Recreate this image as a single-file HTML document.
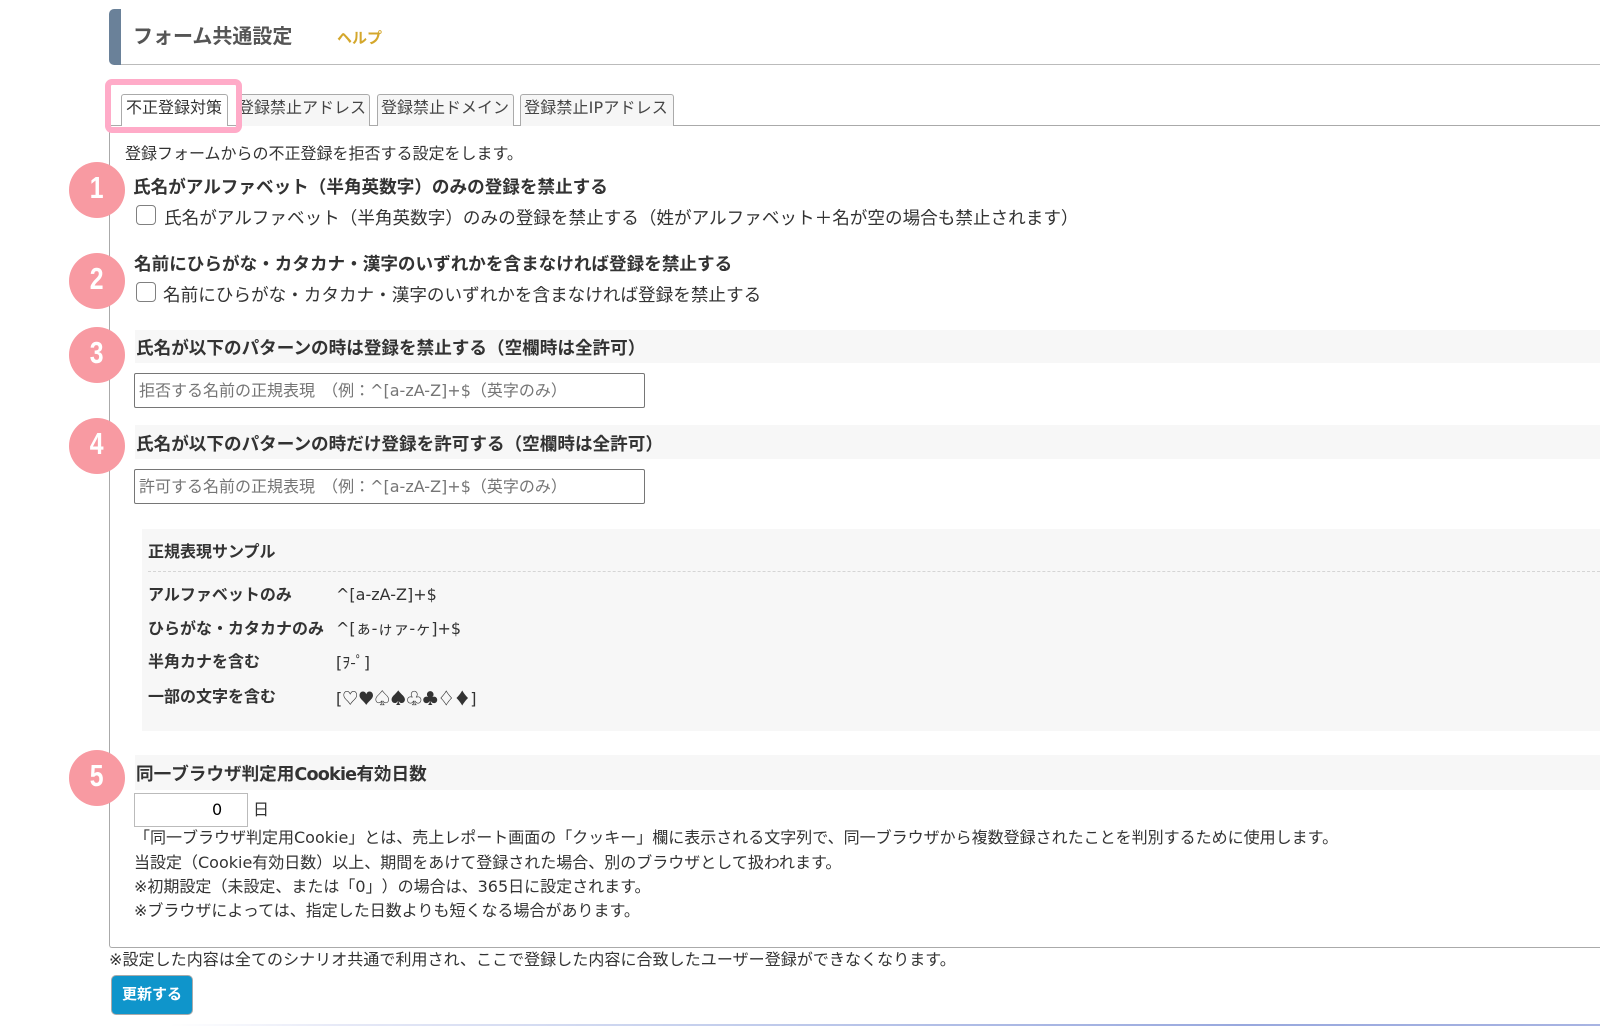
<!DOCTYPE html>
<html lang="ja"><head><meta charset="utf-8"><style>
html,body{margin:0;padding:0;background:#fff;}
body{width:1600px;height:1026px;position:relative;overflow:hidden;font-family:"DejaVu Sans","Noto Sans CJK JP",sans-serif;color:#333;font-size:16px;text-spacing-trim:space-all;}
.t{position:absolute;white-space:nowrap;line-height:24px;}
.b{font-weight:700;color:#333;font-size:17.6px;}
.l{font-size:17.6px;}
.s{font-weight:700;font-family:"Liberation Sans","Noto Sans CJK JP",sans-serif;}
.r{position:absolute;}
.n{position:absolute;left:69px;width:56px;height:56px;border-radius:50%;background:#f89aa2;color:#fff;font-size:31px;font-weight:700;line-height:52px;text-align:center;font-family:"Liberation Sans",sans-serif;}
.n span{display:inline-block;transform:scaleX(.8);}
.cb{position:absolute;left:136px;width:20px;height:20px;box-sizing:border-box;border:1px solid #808080;border-radius:4px;background:#fff;}
.in{position:absolute;left:134px;width:511px;height:35px;box-sizing:border-box;border:1px solid #767676;border-radius:2px;background:#fff;}
.bar{position:absolute;left:135px;width:1465px;background:#f7f7f7;}
.tab{position:absolute;top:94px;height:32px;box-sizing:border-box;border:1px solid #aaa;border-bottom:0;border-radius:3px 3px 0 0;background:#f6f6f6;text-align:center;line-height:25px;font-size:16px;color:#454545;white-space:nowrap;}
</style></head><body>
<div class="r" style="left:109px;top:9px;width:12px;height:56px;background:#6a8199;border-radius:5px 0 0 5px;"></div>
<div class="r" style="left:121px;top:64px;width:1479px;height:1px;background:#bbb;"></div>
<div class="t s" style="left:133px;top:25px;font-size:20px;color:#555;">フォーム共通設定</div>
<div class="t s" style="left:337px;top:27px;font-size:15px;color:#d4a72c;">ヘルプ</div>

<div class="r" style="left:109px;top:125px;width:1491px;height:823px;box-sizing:border-box;border:1px solid #aaa;border-right:0;border-radius:0 0 0 3px;"></div>
<div class="tab" style="left:237px;width:133px;padding-right:3px;">登録禁止アドレス</div>
<div class="tab" style="left:377px;width:137px;padding-right:1px;">登録禁止ドメイン</div>
<div class="tab" style="left:520px;width:154px;letter-spacing:.15px;padding-right:2px;">登録禁止IPアドレス</div>
<div class="r" style="left:105px;top:79px;width:137px;height:54px;box-sizing:border-box;border:6px solid #ffabc8;border-radius:7px;"></div>
<div class="tab" style="left:121px;width:107px;height:32px;background:#fff;color:#333;padding-right:1px;">不正登録対策</div>

<div class="t" style="left:125px;top:142px;">登録フォームからの不正登録を拒否する設定をします。</div>

<div class="n" style="top:162px;"><span>1</span></div>
<div class="t b" style="left:133px;top:176px;">氏名がアルファベット（半角英数字）のみの登録を禁止する</div>
<div class="cb" style="top:205px;"></div>
<div class="t l" style="left:164px;top:207px;">氏名がアルファベット（半角英数字）のみの登録を禁止する（姓がアルファベット＋名が空の場合も禁止されます）</div>

<div class="n" style="top:253px;"><span>2</span></div>
<div class="t b" style="left:134px;top:253px;">名前にひらがな・カタカナ・漢字のいずれかを含まなければ登録を禁止する</div>
<div class="cb" style="top:282px;"></div>
<div class="t l" style="left:163px;top:284px;">名前にひらがな・カタカナ・漢字のいずれかを含まなければ登録を禁止する</div>

<div class="bar" style="top:330px;height:33px;"></div>
<div class="n" style="top:327px;"><span>3</span></div>
<div class="t b" style="left:136px;top:337px;">氏名が以下のパターンの時は登録を禁止する（空欄時は全許可）</div>
<div class="in" style="top:373px;"></div>
<div class="t" style="left:139px;top:379px;color:#757575;word-spacing:2px;">拒否する名前の正規表現 （例：^[a-zA-Z]+$（英字のみ）</div>

<div class="bar" style="top:425px;height:34px;"></div>
<div class="n" style="top:418px;"><span>4</span></div>
<div class="t b" style="left:136px;top:433px;">氏名が以下のパターンの時だけ登録を許可する（空欄時は全許可）</div>
<div class="in" style="top:469px;"></div>
<div class="t" style="left:139px;top:475px;color:#757575;word-spacing:2px;">許可する名前の正規表現 （例：^[a-zA-Z]+$（英字のみ）</div>

<div class="r" style="left:142px;top:529px;width:1458px;height:202px;background:#f7f7f7;"></div>
<div class="r" style="left:148px;top:571px;width:1452px;height:0;border-top:1px dashed #d5d5d5;"></div>
<div class="t s" style="left:148px;top:541px;">正規表現サンプル</div>
<div class="t s" style="left:148px;top:584px;">アルファベットのみ</div>
<div class="t" style="left:336px;top:583px;">^[a-zA-Z]+$</div>
<div class="t s" style="left:148px;top:618px;">ひらがな・カタカナのみ</div>
<div class="t" style="left:336px;top:617px;">^[ぁ-ゖァ-ヶ]+$</div>
<div class="t s" style="left:148px;top:651px;">半角カナを含む</div>
<div class="t" style="left:336px;top:651px;">[ｦ-ﾟ]</div>
<div class="t s" style="left:148px;top:686px;">一部の文字を含む</div>
<div class="t" style="left:336px;top:685px;">[<span style="font-family:'Noto Sans CJK JP',sans-serif;">♡♥♤♠♧♣♢♦</span>]</div>

<div class="bar" style="top:755px;height:35px;"></div>
<div class="n" style="top:750px;"><span>5</span></div>
<div class="t b" style="left:136px;top:763px;">同一ブラウザ判定用<span style="letter-spacing:-.8px;">Cookie</span>有効日数</div>
<div class="r" style="left:134px;top:793px;width:114px;height:34px;box-sizing:border-box;border:1px solid #bbb;background:#fff;"></div>
<div class="t" style="left:212px;top:798px;color:#000;">0</div>
<div class="t" style="left:253px;top:798px;">日</div>
<div class="t" style="left:134px;top:826px;">「同一ブラウザ判定用Cookie」とは、売上レポート画面の「クッキー」欄に表示される文字列で、同一ブラウザから複数登録されたことを判別するために使用します。</div>
<div class="t" style="left:134px;top:851px;">当設定（Cookie有効日数）以上、期間をあけて登録された場合、別のブラウザとして扱われます。</div>
<div class="t" style="left:134px;top:875px;">※初期設定（未設定、または「0」）の場合は、365日に設定されます。</div>
<div class="t" style="left:134px;top:899px;">※ブラウザによっては、指定した日数よりも短くなる場合があります。</div>

<div class="t" style="left:109px;top:948px;letter-spacing:.06px;">※設定した内容は全てのシナリオ共通で利用され、ここで登録した内容に合致したユーザー登録ができなくなります。</div>
<div class="r s" style="left:111px;top:975px;width:82px;height:40px;box-sizing:border-box;border:1px solid #aaa;border-radius:5px;background:#0f95cb;color:#fff;font-size:15px;line-height:38px;text-align:center;">更新する</div>
<div class="r" style="left:170px;top:1024px;width:1430px;height:2px;background:linear-gradient(90deg,#fff 0%,#e6e9f7 12%,#c8d2ee 35%,#98a8de 75%,#a8b4e2 100%);"></div>
</body></html>
